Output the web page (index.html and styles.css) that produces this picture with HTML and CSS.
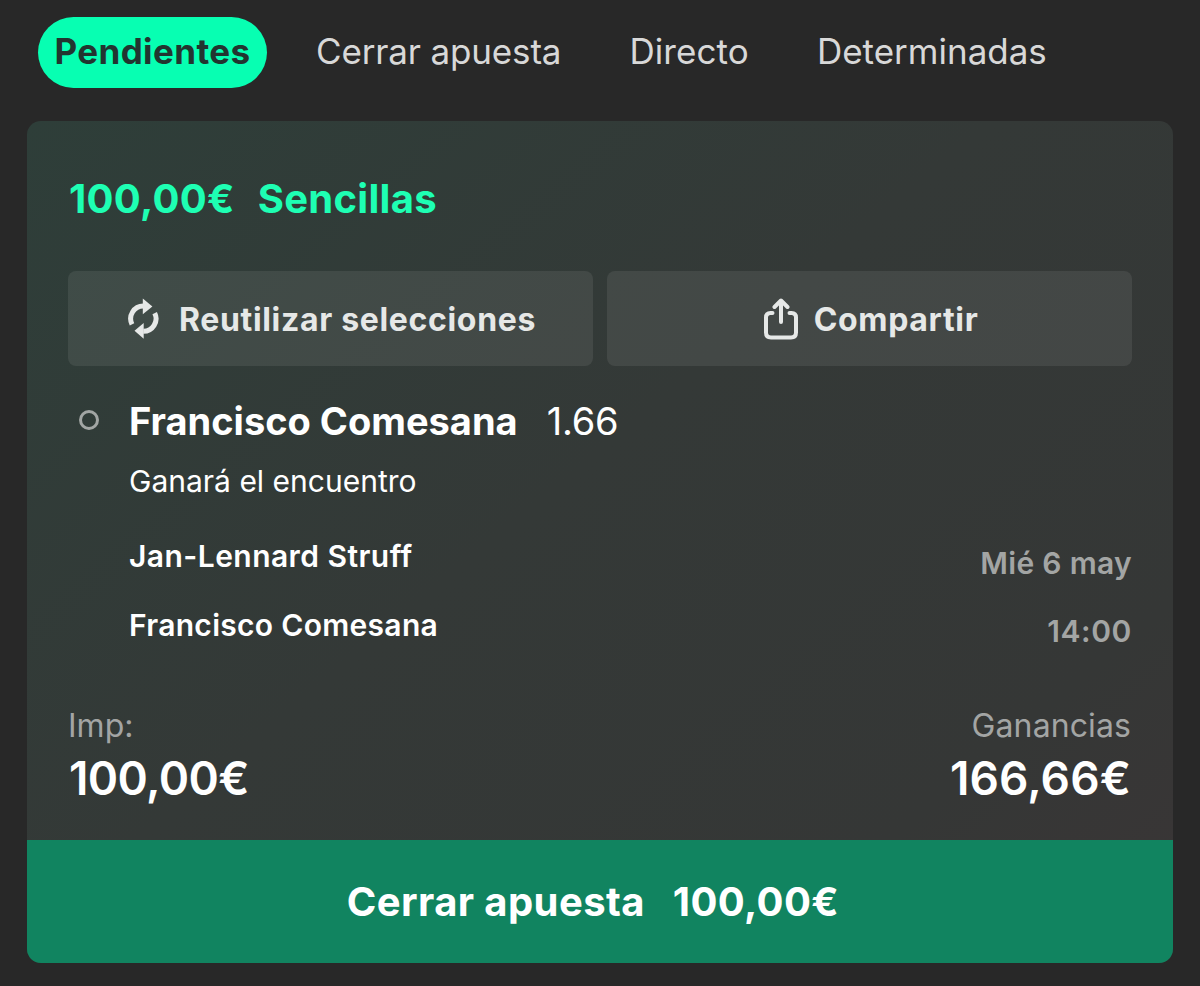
FILE: index.html
```html
<!DOCTYPE html>
<html lang="es">
<head>
    <meta charset="UTF-8">
    <title>Mis apuestas</title>
    <link rel="stylesheet" href="styles.css">
</head>
<body>
    <nav class="tabs">
        <span class="tab active">Pendientes</span>
        <span class="tab cashout">Cerrar apuesta</span>
        <span class="tab live">Directo</span>
        <span class="tab">Determinadas</span>
    </nav>

    <div class="bet-card">
        <div class="bet-body">
            <div class="bet-title">
                <span class="title-stake">100,00€</span>
                <span class="title-type">Sencillas</span>
            </div>

            <div class="actions">
                <button class="action reuse">
                    <svg class="icon-reuse" width="32" height="42" viewBox="0 0 32 42">
                        <path d="M4 26.300A12.600 12.600 0 0 1 15.300 8.100" fill="none" stroke="#e6e8e7" stroke-width="5"/>
                        <path d="M14.800 0.500L24.400 8.500L14.800 16.300Z" fill="#e6e8e7"/>
                        <path d="M26.700 15.100A12.600 12.600 0 0 1 15.300 33.300" fill="none" stroke="#e6e8e7" stroke-width="5"/>
                        <path d="M15.700 40.800L6.500 32.700L15.700 25Z" fill="#e6e8e7"/>
                    </svg>
                    <span>Reutilizar selecciones</span>
                </button>
                <button class="action share">
                    <svg class="icon-share" width="34" height="42" viewBox="0 0 34 42" fill="none" stroke="#e6e8e7" stroke-width="4" stroke-linecap="round" stroke-linejoin="round">
                        <path d="M8.500 15H6.500Q2 15 2 19.500V34.500Q2 39.500 7 39.500H27Q32 39.500 32 34.500V19.500Q32 15 27.500 15H25.500"/>
                        <path d="M17 24V3M10.500 9L17 2.500L23.500 9"/>
                    </svg>
                    <span>Compartir</span>
                </button>
            </div>

            <div class="selection">
                <div class="dot"></div>
                <div class="selection-info">
                    <div class="selection-head">
                        <span class="player">Francisco Comesana</span>
                        <span class="odds">1.66</span>
                    </div>
                    <div class="market">Ganará el encuentro</div>
                    <div class="event">
                        <div class="teams">
                            <div class="team-one">Jan-Lennard Struff</div>
                            <div class="team-two">Francisco Comesana</div>
                        </div>
                        <div class="date">
                            <div class="day">Mié 6 may</div>
                            <div class="time">14:00</div>
                        </div>
                    </div>
                </div>
            </div>

            <div class="totals">
                <div class="total left">
                    <div class="label">Imp:</div>
                    <div class="amount">100,00€</div>
                </div>
                <div class="total right">
                    <div class="label">Ganancias</div>
                    <div class="amount">166,66€</div>
                </div>
            </div>
        </div>

        <button class="close-bet">
            <span class="close-label">Cerrar apuesta</span>
            <span class="close-amount">100,00€</span>
        </button>
    </div>
</body>
</html>
```

FILE: styles.css
```css
body {
    margin: 0;
    background-color: #282828;
    color: #ffffff;
    font-family: 'Inter', sans-serif;
}

span, .label, .amount, .market, .teams, .date {
    white-space: nowrap;
}

.tabs {
    display: flex;
    height: 71px;
    padding: 17px 0 0 38px;
    line-height: 68px;
    font-size: 35px;
    color: #d8d8d8;
}

.tab {
    margin-right: 68px;
}

.cashout {
    letter-spacing: -0.15px;
}

.live {
    letter-spacing: 0.1px;
}

.tab.active {
    box-sizing: border-box;
    width: 229px;
    margin-right: 49px;
    text-align: center;
    border-radius: 36px;
    background-color: #07ffb2;
    color: #223530;
    font-weight: 700;
    letter-spacing: 0.4px;
}

.bet-card {
    width: 1146px;
    height: 842px;
    margin: 33px 0 0 27px;
    border-radius: 14px;
    overflow: hidden;
    background: linear-gradient(140deg, #2e3e39 0%, #343937 45%, #353736 80%, #3a3536 100%);
}

.bet-body {
    height: 671px;
    padding: 48px 41px 0;
}

.bet-title {
    display: flex;
    gap: 23px;
    padding-left: 1px;
    line-height: 60px;
    font-size: 40px;
    font-weight: 700;
    color: #1effb3;
    letter-spacing: 0.3px;
}

.actions {
    display: flex;
    gap: 14px;
    margin-top: 42px;
}

.action {
    display: flex;
    flex: 1;
    justify-content: center;
    align-items: center;
    height: 95px;
    padding: 0 0 0 3px;
    border: none;
    border-radius: 8px;
    background-color: rgba(255, 255, 255, 0.08);
    color: #e6e8e7;
    font-family: inherit;
    font-size: 32px;
    font-weight: 700;
    letter-spacing: 0.67px;
}

.action span {
    padding-top: 1px;
}

.icon-reuse {
    margin-right: 19px;
}

.icon-share {
    margin-right: 16px;
}

.selection {
    display: flex;
    margin-top: 30px;
}

.dot {
    box-sizing: border-box;
    width: 20px;
    height: 20px;
    margin: 14px 30px 0 11px;
    border: 3px solid #a2a6a4;
    border-radius: 50%;
}

.selection-info {
    flex: 1;
}

.selection-head {
    display: flex;
    gap: 29px;
    line-height: 50px;
    font-size: 38px;
}

.player {
    font-weight: 700;
}

.odds {
    letter-spacing: -0.2px;
}

.market {
    margin-top: 15px;
    line-height: 40px;
    font-size: 30px;
}

.event {
    display: flex;
    justify-content: space-between;
    margin-top: 35px;
    line-height: 40px;
    font-size: 30px;
    font-weight: 600;
}

.team-one {
    letter-spacing: 0.45px;
}

.team-two {
    margin-top: 29px;
    letter-spacing: 0.3px;
}

.date {
    padding-top: 7px;
    text-align: right;
    color: #a3a5a4;
}

.day {
    letter-spacing: 0.3px;
}

.time {
    margin-top: 28px;
    letter-spacing: 0.6px;
}

.totals {
    display: flex;
    justify-content: space-between;
    margin-top: 55px;
}

.left .amount {
    padding-left: 1px;
    letter-spacing: -0.6px;
}

.right {
    padding-right: 1px;
    text-align: right;
}

.right .label {
    letter-spacing: 0.1px;
}

.label {
    line-height: 40px;
    font-size: 32px;
    color: #a3a5a4;
}

.amount {
    margin-top: 4px;
    line-height: 56px;
    font-size: 46px;
    font-weight: 600;
}

.right .amount {
    letter-spacing: 0.1px;
}

.close-bet {
    display: flex;
    justify-content: center;
    align-items: center;
    gap: 28px;
    width: 100%;
    height: 123px;
    padding: 0 14px 0 0;
    border: none;
    background-color: #118460;
    color: #ffffff;
    font-family: inherit;
    font-size: 40px;
    font-weight: 700;
    letter-spacing: 0.4px;
}
```
